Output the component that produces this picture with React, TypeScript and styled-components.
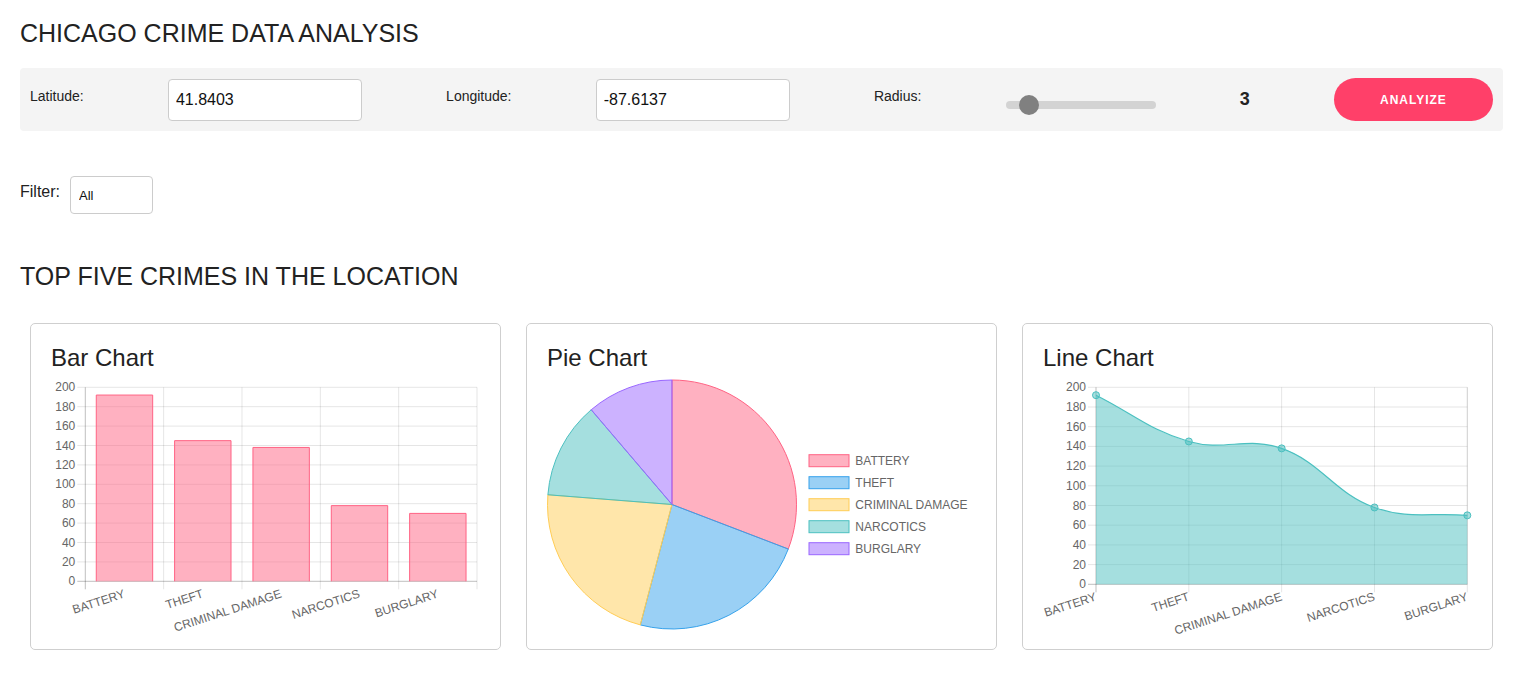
import React from 'react';
import styled, { createGlobalStyle } from 'styled-components';

const GlobalStyle = createGlobalStyle`
  body {
    margin: 0;
    background: #ffffff;
    color: #222222;
    font-family: 'Liberation Sans', Arial, Helvetica, sans-serif;
  }
`;

type Crime = {
  label: string;
  value: number;
};

const crimes: Crime[] = [
  { label: 'BATTERY', value: 192 },
  { label: 'THEFT', value: 145 },
  { label: 'CRIMINAL DAMAGE', value: 138 },
  { label: 'NARCOTICS', value: 78 },
  { label: 'BURGLARY', value: 70 },
];

const palette = [
  { fill: 'rgba(255, 99, 132, 0.5)', stroke: 'rgb(255, 99, 132)' },
  { fill: 'rgba(54, 162, 235, 0.5)', stroke: 'rgb(54, 162, 235)' },
  { fill: 'rgba(255, 205, 86, 0.5)', stroke: 'rgb(255, 205, 86)' },
  { fill: 'rgba(75, 192, 192, 0.5)', stroke: 'rgb(75, 192, 192)' },
  { fill: 'rgba(153, 102, 255, 0.5)', stroke: 'rgb(153, 102, 255)' },
];

const ticks = [0, 20, 40, 60, 80, 100, 120, 140, 160, 180, 200];

const Page = styled('main')`
  padding: 19px 20px 20px;
`;

const Title = styled('h1')`
  font-size: 25px;
  font-weight: 400;
  line-height: 29px;
  margin: 0;
  color: #222222;
`;

const ControlPanel = styled('section')`
  align-items: center;
  background-color: #f4f4f4;
  border-radius: 4px;
  display: flex;
  justify-content: space-between;
  margin-top: 20px;
  padding: 10px;
`;

const FieldLabel = styled('label')`
  color: #222222;
  font-size: 14px;
  margin-bottom: 8px;
`;

const TextInput = styled('input')`
  border: 1px solid #cccccc;
  border-radius: 4px;
  box-sizing: border-box;
  color: #111111;
  font-family: inherit;
  font-size: 16px;
  height: 42px;
  padding: 0 7px;
  width: 194px;
`;

const RadiusSlider = styled('input')`
  -webkit-appearance: none;
  appearance: none;
  background: #d3d3d3;
  border-radius: 5px;
  height: 8px;
  margin: 10px 0 0;
  outline: none;
  padding: 0;
  width: 150px;

  &::-webkit-slider-thumb {
    -webkit-appearance: none;
    appearance: none;
    background: #808080;
    border-radius: 50%;
    height: 20px;
    width: 20px;
  }
`;

const RadiusValue = styled('span')`
  color: #222222;
  font-size: 18px;
  font-weight: 700;
`;

const AnalyzeButton = styled('button')`
  background-color: #ff4069;
  border: none;
  border-radius: 22px;
  color: #ffffff;
  cursor: pointer;
  font-family: inherit;
  font-size: 12px;
  font-weight: 700;
  height: 43px;
  letter-spacing: 1px;
  width: 159px;
`;

const FilterRow = styled('div')`
  align-items: center;
  display: flex;
  margin-top: 45px;
`;

const FilterLabel = styled('label')`
  font-size: 16px;
  margin: 0 10px 7px 0;
`;

const FilterSelect = styled('select')`
  -webkit-appearance: none;
  appearance: none;
  background: #ffffff;
  border: 1px solid #cccccc;
  border-radius: 4px;
  color: #111111;
  font-family: inherit;
  font-size: 13px;
  height: 38px;
  padding: 0 8px;
  width: 83px;
`;

const SectionTitle = styled('h2')`
  color: #222222;
  font-size: 25px;
  font-weight: 400;
  line-height: 29px;
  margin: 48px 0 0;
`;

const ChartGrid = styled('section')`
  display: flex;
  gap: 25px;
  margin-top: 32px;
  padding: 0 10px;
`;

const ChartCard = styled('article')`
  border: 1px solid #cfcfcf;
  border-radius: 5px;
  box-sizing: border-box;
  flex: 1;
  height: 327px;
  padding: 20px;
`;

const ChartTitle = styled('h3')`
  color: #222222;
  font-size: 24px;
  font-weight: 400;
  line-height: 28px;
  margin: 0 0 4px;
`;

const ChartSvg = styled('svg')`
  display: block;
  font-family: 'Liberation Sans', Arial, Helvetica, sans-serif;
  overflow: visible;
`;

const TICK_COLOR = '#666666';
const GRID_COLOR = 'rgba(0, 0, 0, 0.1)';
const ZERO_COLOR = 'rgba(0, 0, 0, 0.25)';

type Area = {
  left: number;
  right: number;
  top: number;
  bottom: number;
};

const YAxis: React.FC<{ area: Area }> = ({ area }) => {
  const scale = (area.bottom - area.top) / 200;
  return (
    <g>
      {
        ticks.map((tick) => {
          const y = area.bottom - tick * scale;
          return (
            <g key={ tick }>
              <line
                x1={ area.left - 8 }
                x2={ area.right }
                y1={ y }
                y2={ y }
                stroke={ tick === 0 ? ZERO_COLOR : GRID_COLOR }
              />
              <text
                x={ area.left - 10 }
                y={ y }
                fontSize={ 12 }
                fill={ TICK_COLOR }
                textAnchor='end'
                dominantBaseline='central'
              >
                { tick }
              </text>
            </g>
          );
        })
      }
    </g>
  );
};

const XLabels: React.FC<{ positions: number[]; y: number }> = ({ positions, y }) => (
  <g>
    {
      crimes.map((crime, index) => (
        <text
          key={ crime.label }
          x={ positions[index] }
          y={ y }
          fontSize={ 12 }
          fill={ TICK_COLOR }
          textAnchor='end'
          dominantBaseline='central'
          transform={ `rotate(-18 ${ positions[index] } ${ y })` }
        >
          { crime.label }
        </text>
      ))
    }
  </g>
);

const BarChart: React.FC = () => {
  const area = { left: 34.3, right: 426, top: 11.3, bottom: 205.3 };
  const scale = (area.bottom - area.top) / 200;
  const step = (area.right - area.left) / crimes.length;
  const barWidth = step * 0.72;
  const centers = crimes.map((_, index) => area.left + step * (index + 0.5));

  return (
    <ChartSvg width={ 429 } height={ 253 }>
      <YAxis area={ area } />
      {
        [0, 1, 2, 3, 4, 5].map((index) => {
          const x = area.left + step * index;
          return (
            <line
              key={ index }
              x1={ x }
              x2={ x }
              y1={ area.top }
              y2={ area.bottom + 8 }
              stroke={ index === 0 ? ZERO_COLOR : GRID_COLOR }
            />
          );
        })
      }
      {
        crimes.map((crime, index) => {
          const x0 = centers[index] - barWidth / 2;
          const x1 = centers[index] + barWidth / 2;
          const y = area.bottom - crime.value * scale;
          return (
            <g key={ crime.label }>
              <rect x={ x0 } y={ y } width={ barWidth } height={ area.bottom - y } fill={ palette[0].fill } />
              <path
                d={ `M${ x0 } ${ area.bottom } V${ y } H${ x1 } V${ area.bottom }` }
                fill='none'
                stroke={ palette[0].stroke }
              />
            </g>
          );
        })
      }
      <XLabels positions={ centers } y={ area.bottom + 12 } />
    </ChartSvg>
  );
};

const PieChart: React.FC = () => {
  const cx = 125;
  const cy = 128.5;
  const r = 124.5;
  const total = crimes.reduce((sum, crime) => sum + crime.value, 0);
  let start = 0;

  const point = (angle: number) => {
    const rad = (angle * Math.PI) / 180;
    return `${ cx + r * Math.sin(rad) } ${ cy - r * Math.cos(rad) }`;
  };

  return (
    <ChartSvg width={ 429 } height={ 253 }>
      {
        crimes.map((crime, index) => {
          const sweep = (crime.value / total) * 360;
          const end = start + sweep;
          const d = `M${ cx } ${ cy } L${ point(start) } A${ r } ${ r } 0 ${ sweep > 180 ? 1 : 0 } 1 ${ point(end) } Z`;
          start = end;
          return (
            <path key={ crime.label } d={ d } fill={ palette[index].fill } stroke={ palette[index].stroke } />
          );
        })
      }
      {
        crimes.map((crime, index) => {
          const y = 84.7 + index * 22;
          return (
            <g key={ crime.label }>
              <rect
                x={ 262 }
                y={ y - 6 }
                width={ 40 }
                height={ 12 }
                fill={ palette[index].fill }
                stroke={ palette[index].stroke }
              />
              <text x={ 308.3 } y={ y } fontSize={ 12 } fill={ TICK_COLOR } dominantBaseline='central'>
                { crime.label }
              </text>
            </g>
          );
        })
      }
    </ChartSvg>
  );
};

type Point = { x: number; y: number };

const splinePath = (points: Point[], tension: number, area: Area) => {
  const controls = points.map((current, index) => {
    const previous = points[index - 1] ?? current;
    const next = points[index + 1] ?? current;
    const d01 = Math.hypot(current.x - previous.x, current.y - previous.y);
    const d12 = Math.hypot(next.x - current.x, next.y - current.y);
    const s01 = d01 + d12 === 0 ? 0 : d01 / (d01 + d12);
    const s12 = d01 + d12 === 0 ? 0 : d12 / (d01 + d12);
    const clampY = (y: number) => Math.min(area.bottom, Math.max(area.top, y));
    return {
      before: { x: current.x - tension * s01 * (next.x - previous.x), y: clampY(current.y - tension * s01 * (next.y - previous.y)) },
      after: { x: current.x + tension * s12 * (next.x - previous.x), y: clampY(current.y + tension * s12 * (next.y - previous.y)) },
    };
  });

  let d = `M${ points[0].x } ${ points[0].y }`;
  for (let i = 1; i < points.length; i++) {
    const a = controls[i - 1].after;
    const b = controls[i].before;
    d += ` C${ a.x } ${ a.y } ${ b.x } ${ b.y } ${ points[i].x } ${ points[i].y }`;
  }
  return d;
};

const LineChart: React.FC = () => {
  const area = { left: 53, right: 424.3, top: 11.3, bottom: 208.3 };
  const scale = (area.bottom - area.top) / 200;
  const step = (area.right - area.left) / (crimes.length - 1);
  const points = crimes.map((crime, index) => ({ x: area.left + step * index, y: area.bottom - crime.value * scale }));
  const curve = splinePath(points, 0.4, area);
  const color = palette[3];

  return (
    <ChartSvg width={ 429 } height={ 253 }>
      <YAxis area={ area } />
      {
        points.map((p, index) => (
          <line
            key={ index }
            x1={ p.x }
            x2={ p.x }
            y1={ area.top }
            y2={ area.bottom + 8 }
            stroke={ index === 0 ? ZERO_COLOR : GRID_COLOR }
          />
        ))
      }
      <line x1={ area.right } x2={ area.right } y1={ area.top } y2={ area.bottom } stroke={ GRID_COLOR } />
      <path
        d={ `${ curve } L${ area.right } ${ area.bottom } L${ area.left } ${ area.bottom } Z` }
        fill={ color.fill }
      />
      <path d={ curve } fill='none' stroke={ color.stroke } strokeWidth={ 1.2 } />
      {
        points.map((p, index) => (
          <circle key={ index } cx={ p.x } cy={ p.y } r={ 3.5 } fill={ color.fill } stroke={ color.stroke } />
        ))
      }
      <XLabels positions={ points.map((p) => p.x) } y={ area.bottom + 12 } />
    </ChartSvg>
  );
};

const App: React.FC = () => {
  return (
    <Page>
      <GlobalStyle />
      <Title>CHICAGO CRIME DATA ANALYSIS</Title>

      <ControlPanel>
        <FieldLabel htmlFor='latitude'>Latitude:</FieldLabel>
        <TextInput id='latitude' defaultValue='41.8403' />
        <FieldLabel htmlFor='longitude'>Longitude:</FieldLabel>
        <TextInput id='longitude' defaultValue='-87.6137' />
        <FieldLabel htmlFor='radius'>Radius:</FieldLabel>
        <RadiusSlider id='radius' type='range' min={ 1 } max={ 20 } defaultValue={ 3 } />
        <RadiusValue>3</RadiusValue>
        <AnalyzeButton type='button'>ANALYIZE</AnalyzeButton>
      </ControlPanel>

      <FilterRow>
        <FilterLabel htmlFor='filter'>Filter:</FilterLabel>
        <FilterSelect id='filter' defaultValue='All'>
          <option value='All'>All</option>
        </FilterSelect>
      </FilterRow>

      <SectionTitle>TOP FIVE CRIMES IN THE LOCATION</SectionTitle>

      <ChartGrid>
        <ChartCard>
          <ChartTitle>Bar Chart</ChartTitle>
          <BarChart />
        </ChartCard>
        <ChartCard>
          <ChartTitle>Pie Chart</ChartTitle>
          <PieChart />
        </ChartCard>
        <ChartCard>
          <ChartTitle>Line Chart</ChartTitle>
          <LineChart />
        </ChartCard>
      </ChartGrid>
    </Page>
  );
};

export default App;
